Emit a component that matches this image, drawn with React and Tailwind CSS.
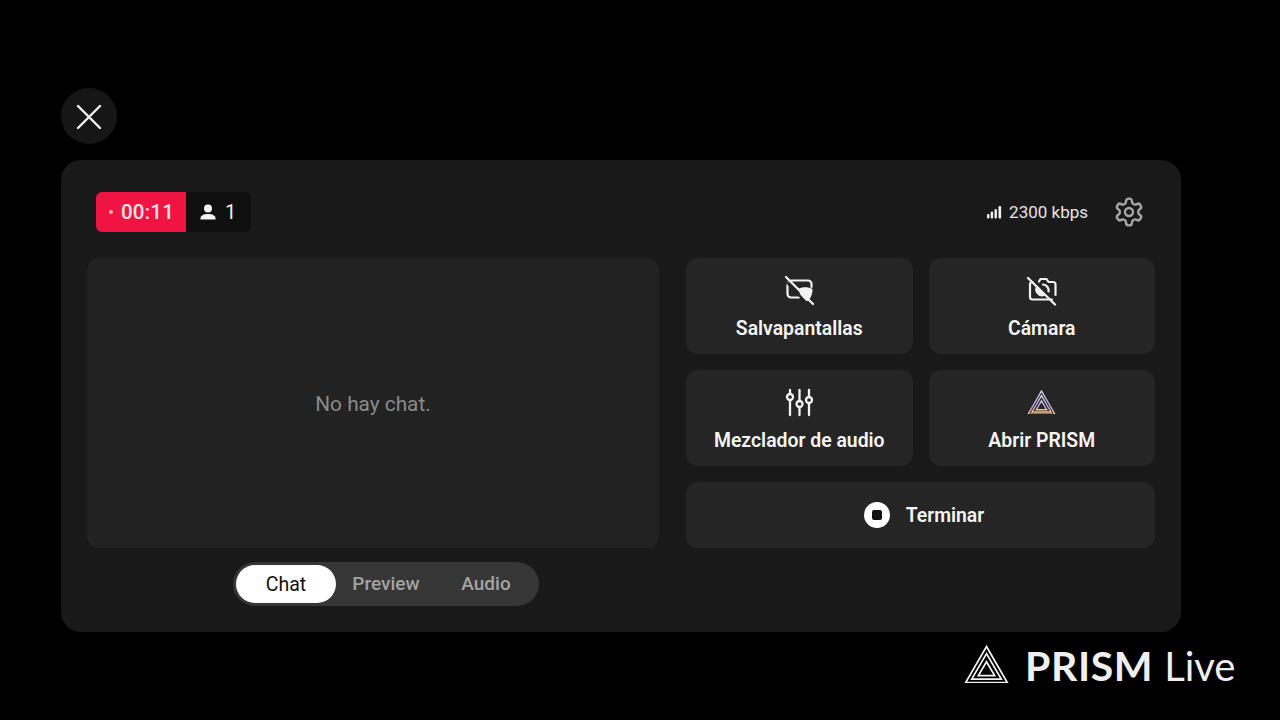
import React from "react";

const ScreensaverOff = () => (
  <svg width="32" height="32" viewBox="0 0 32 32" fill="none" stroke="#f2f2f2" strokeWidth="2.200" strokeLinecap="round" strokeLinejoin="round">
    <path d="M8 6.500 H25 a3.500 3.500 0 0 1 3.500 3.500 v3" />
    <path d="M4.500 8 v12 a3.500 3.500 0 0 0 3.500 3.500 h8" />
    <path d="M16 14.500 C20 12.500 26 13 29.500 15 C29.500 20.500 27.500 25.500 23.500 27.500 C19 25.500 16 20 16 14.500 Z" fill="#f2f2f2" stroke="none" />
    <path d="M1 5.500 L26.500 32" stroke="#252525" strokeWidth="2.400" />
    <path d="M3 3 L30 30" strokeWidth="2.300" />
  </svg>
);

const CameraOff = () => (
  <svg width="32" height="32" viewBox="0 0 32 32" fill="none" stroke="#f2f2f2" strokeWidth="2.200" strokeLinecap="round" strokeLinejoin="round">
    <path d="M13 7.500 l1.500 -2.500 h6 l2 3 H27 a2.500 2.500 0 0 1 2.500 2.500 V21" />
    <path d="M26 25.500 H6.500 a2.500 2.500 0 0 1 -2.500 -2.500 V10.500 a2.500 2.500 0 0 1 2.500 -2.500" />
    <path d="M11 11.500 a6.500 6.500 0 0 0 8 10 z" fill="#f2f2f2" stroke="none" />
    <path d="M17 10.500 a6 6 0 0 1 5.500 7" />
    <path d="M2 4 L29 30.500" strokeWidth="2.300" />
  </svg>
);

const Mixer = () => (
  <svg width="32" height="32" viewBox="0 0 32 32" fill="none" stroke="#f2f2f2" strokeWidth="2.300" strokeLinecap="round">
    <path d="M7 4 v4 M7 14 v15 M16.500 4 v11 M16.500 21 v8 M26 4 v7 M26 17 v12" />
    <circle cx="7" cy="11" r="3" />
    <circle cx="16.500" cy="18" r="3" />
    <circle cx="26" cy="14" r="3" />
  </svg>
);

const Prism = ({ size, grad }) => (
  <svg width={size} height={size * 0.86} viewBox="0 0 44 38" fill="none" strokeLinejoin="miter">
    {grad && (
      <defs>
        <linearGradient id="pg" x1="0" y1="0" x2="0" y2="1">
          <stop offset="0" stopColor="#dcd8e6" />
          <stop offset="0.6" stopColor="#b9a3e6" />
          <stop offset="1" stopColor="#f2c79a" />
        </linearGradient>
      </defs>
    )}
    <g stroke={grad ? "url(#pg)" : "#f2f2f2"} strokeWidth={grad ? "2.100" : "1.700"}>
      <path d="M22 1.500 L42.500 37 H1.500 Z" />
      <path d="M22 8.500 L36.500 33.500 H7.500 Z" />
      <path d="M22 16.500 L30 30 H14 Z" />
    </g>
  </svg>
);

const Gear = () => (
  <svg width="32" height="32" viewBox="0 0 24 24" fill="none" stroke="#a6a6a6" strokeWidth="1.800" strokeLinecap="round" strokeLinejoin="round">
    <path d="M12.220 2h-.440a2 2 0 0 0-2 2v.180a2 2 0 0 1-1 1.730l-.430.250a2 2 0 0 1-2 0l-.150-.080a2 2 0 0 0-2.730.730l-.220.380a2 2 0 0 0 .730 2.730l.150.100a2 2 0 0 1 1 1.720v.510a2 2 0 0 1-1 1.740l-.150.090a2 2 0 0 0-.730 2.730l.220.380a2 2 0 0 0 2.730.730l.150-.080a2 2 0 0 1 2 0l.430.250a2 2 0 0 1 1 1.730V20a2 2 0 0 0 2 2h.440a2 2 0 0 0 2-2v-.180a2 2 0 0 1 1-1.730l.430-.250a2 2 0 0 1 2 0l.150.080a2 2 0 0 0 2.730-.730l.220-.390a2 2 0 0 0-.730-2.730l-.150-.080a2 2 0 0 1-1-1.740v-.500a2 2 0 0 1 1-1.740l.150-.090a2 2 0 0 0 .730-2.730l-.220-.380a2 2 0 0 0-2.730-.730l-.150.080a2 2 0 0 1-2 0l-.430-.250a2 2 0 0 1-1-1.730V4a2 2 0 0 0-2-2z" />
    <circle cx="12" cy="12" r="3" />
  </svg>
);

const Card = ({ icon, label }) => (
  <div className="h-[96px] rounded-[12px] bg-[#252525] flex flex-col items-center pt-[16px]">
    <div className="h-[32px] flex items-center justify-center">{icon}</div>
    <div className="mt-[11px] text-[19.400px] leading-[24px] font-semibold text-[#f5f5f5]">{label}</div>
  </div>
);

export default function App() {
  return (
    <div className="relative w-full h-[720px] bg-black overflow-hidden pt-[88px] pl-[61px] font-['Roboto',sans-serif]">
      <div className="w-[56px] h-[56px] rounded-full bg-[#161616] flex items-center justify-center pt-[1px]">
        <svg width="28" height="28" viewBox="0 0 28 28" fill="none" stroke="#f2f2f2" strokeWidth="2.400" strokeLinecap="round">
          <path d="M3 3 L25 25 M25 3 L3 25" />
        </svg>
      </div>

      <div className="mt-[16px] w-[1120px] h-[472px] rounded-[20px] bg-[#191919] px-[26px] pt-[32px]">
        <div className="h-[40px] flex items-center justify-between pl-[9px] pr-[10px]">
          <div className="flex h-[40px] rounded-[6px] overflow-hidden">
            <div className="w-[90px] bg-[#ef1441] flex items-center pl-[13px]">
              <span className="w-[4px] h-[4px] rounded-full bg-[#ffb3c2] mr-[8px]" />
              <span className="text-[20.500px] font-medium tracking-[0.2px] text-[#fbe4e9]">00:11</span>
            </div>
            <div className="w-[65px] bg-[#0f0f0f] flex items-center pl-[13px]">
              <svg width="18" height="18" viewBox="0 0 18 18" fill="#f2f2f2">
                <circle cx="9" cy="5.500" r="4" />
                <path d="M1.500 16.500 v-1.500 c0 -2.500 3.500 -4 7.500 -4 s7.500 1.500 7.500 4 v1.500 z" />
              </svg>
              <span className="ml-[8px] text-[20px] text-[#ececec]">1</span>
            </div>
          </div>
          <div className="flex items-center">
            <svg width="17" height="14" viewBox="0 0 16 14" fill="#f2f2f2">
              <rect x="0.500" y="9" width="2.400" height="4.500" rx="1" />
              <rect x="4.200" y="6.500" width="2.400" height="7" rx="1" />
              <rect x="8" y="4" width="2.400" height="9.500" rx="1" />
              <rect x="12" y="1" width="2.600" height="12.500" rx="1" />
            </svg>
            <span className="ml-[6px] pt-[2px] text-[17px] text-[#e6e6e6]">2300 kbps</span>
            <span className="ml-[25px] flex"><Gear /></span>
          </div>
        </div>

        <div className="mt-[26px] flex gap-[27px]">
          <div className="w-[572px] h-[290px] rounded-[12px] bg-[#222222] flex items-center justify-center pt-[4px]">
            <span className="text-[20.800px] text-[#8a8a8a]">No hay chat.</span>
          </div>
          <div className="w-[469px] flex flex-col gap-[16px]">
            <div className="grid grid-cols-2 gap-[16px]">
              <Card icon={<ScreensaverOff />} label="Salvapantallas" />
              <Card icon={<CameraOff />} label="Cámara" />
              <Card icon={<Mixer />} label="Mezclador de audio" />
              <Card icon={<Prism size={29} grad />} label="Abrir PRISM" />
            </div>
            <div className="h-[66px] rounded-[12px] bg-[#252525] flex items-center justify-center gap-[16px] pl-[7px]">
              <span className="w-[26px] h-[26px] rounded-full bg-white flex items-center justify-center">
                <span className="w-[10px] h-[10px] rounded-[2px] bg-[#111]" />
              </span>
              <span className="pt-[2px] text-[19.400px] font-semibold text-[#f5f5f5]">Terminar</span>
            </div>
          </div>
        </div>

        <div className="mt-[14px] ml-[146px] w-[306px] h-[44px] rounded-full bg-[#363636] flex items-center pl-[3px] text-[19px] font-medium">
          <div className="w-[100px] h-[38px] pt-[1px] rounded-full bg-white text-[#111] font-normal text-[19.500px] flex items-center justify-center">Chat</div>
          <div className="w-[100px] text-center text-[#a3a3a3]">Preview</div>
          <div className="w-[100px] text-center text-[#a3a3a3]">Audio</div>
        </div>
      </div>

      <div className="absolute left-[964px] top-[644px] flex items-center text-[#efefef]">
        <span className="flex mb-[4px]"><Prism size={45} /></span>
        <span className="ml-[16px] text-[41px] leading-[44px] font-bold font-['Lato',sans-serif] tracking-[0.600px]">PRISM</span>
        <span className="ml-[11px] text-[40px] leading-[44px] font-normal font-['Lato',sans-serif]">Live</span>
      </div>
    </div>
  );
}
